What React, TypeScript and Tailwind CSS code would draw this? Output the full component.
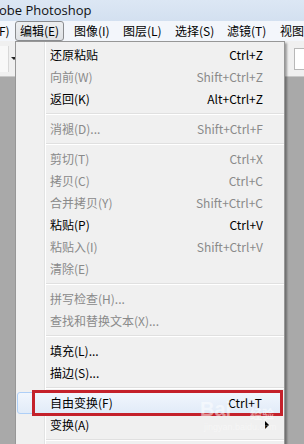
import React from "react";

type Item =
  | { sep: true }
  | { sep?: false; t: string; s?: string; d?: boolean; hl?: boolean; sub?: boolean };

const items: Item[] = [
  { t: "还原粘贴", s: "Ctrl+Z" },
  { t: "向前(W)", s: "Shift+Ctrl+Z", d: true },
  { t: "返回(K)", s: "Alt+Ctrl+Z" },
  { sep: true },
  { t: "消褪(D)...", s: "Shift+Ctrl+F", d: true },
  { sep: true },
  { t: "剪切(T)", s: "Ctrl+X", d: true },
  { t: "拷贝(C)", s: "Ctrl+C", d: true },
  { t: "合并拷贝(Y)", s: "Shift+Ctrl+C", d: true },
  { t: "粘贴(P)", s: "Ctrl+V" },
  { t: "粘贴入(I)", s: "Shift+Ctrl+V", d: true },
  { t: "清除(E)", d: true },
  { sep: true },
  { t: "拼写检查(H)...", d: true },
  { t: "查找和替换文本(X)...", d: true },
  { sep: true },
  { t: "填充(L)..." },
  { t: "描边(S)..." },
  { sep: true },
  { t: "自由变换(F)", s: "Ctrl+T", hl: true },
  { t: "变换(A)", sub: true },
  { sep: true },
];

const font = { fontFamily: '"Noto Sans CJK SC", "Noto Sans", sans-serif' };

export default function App() {
  return (
    <div
      className="relative w-[304px] h-[444px] overflow-hidden bg-[#a9a9a9] text-[12px] text-black"
      style={font}
    >
      {/* title bar */}
      <div className="h-[21px] bg-gradient-to-b from-[#dce7f4] to-[#d3e0f0] flex items-center">
        <span className="text-[13px] leading-none -ml-[1px] text-[#111]" style={{ fontFamily: '"Open Sans", "Noto Sans", sans-serif' }}>
          obe Photoshop
        </span>
      </div>
      {/* menu bar */}
      <div className="h-[20px] bg-[#f3f6fb] flex items-center text-[12px] leading-none whitespace-nowrap overflow-hidden">
        <div className="w-[16px] shrink-0 -ml-[1px]">F)</div>
        <div className="w-[54px] h-[20px] shrink-0">
          <div className="w-[49px] h-[20px] border border-[#8a8c8f] rounded-[3px] bg-gradient-to-b from-[#eceef0] to-[#dfe2e6] flex items-center pl-[4px]">
            编辑(E)
          </div>
        </div>
        <div className="w-[49px] shrink-0 pl-[5px]">图像(I)</div>
        <div className="w-[52px] shrink-0 pl-[5px]">图层(L)</div>
        <div className="w-[52px] shrink-0 pl-[5px]">选择(S)</div>
        <div className="w-[53px] shrink-0 pl-[5px]">滤镜(T)</div>
        <div className="shrink-0 pl-[5px]">视图(V)</div>
      </div>
      {/* options bar */}
      <div className="h-[36px] bg-[#f0f0f0] border-b border-[#c8c8c8] flex items-center">
        <div className="w-[9px] h-[26px] bg-[#f8f8f8] border-r border-[#d8d8d8]" />
        <svg width="6" height="4" className="ml-[2px]" viewBox="0 0 6 4">
          <polygon points="0,0 6,0 3,3" fill="#222" />
        </svg>
        <div className="flex-1" />
        <div className="w-[10px] h-[22px] bg-white border border-[#b8b8b8] border-r-0" />
      </div>

      {/* dropdown menu */}
      <div className="absolute left-[15px] top-[41px] w-[270px] bg-[#f0f0f0] border border-[#979797] shadow-[2px_2px_2px_rgba(0,0,0,0.35)] pt-[2px]">
        <div className="absolute left-[28px] top-0 bottom-0 w-[2px] border-l border-[#e2e3e3]">
          <div className="w-[1px] h-full bg-white" />
        </div>
        {items.map((it, i) =>
          it.sep ? (
            <div key={i} className="h-[8px] flex items-center pl-[30px]">
              <div className="w-full border-t border-[#e0e0e0] border-b border-b-white" />
            </div>
          ) : (
            <div
              key={i}
              className={`relative h-[22px] flex items-center pl-[33px] pr-[20px] mx-[1px] ${
                it.hl ? "bg-gradient-to-b from-[#f1f6fd] to-[#e1ebf8] border border-[#aecff7] rounded-[3px]" : ""
              } ${it.d ? "text-[#8a8a8a]" : "text-black"}`}
            >
              <span className={it.hl ? "-ml-[1px]" : ""}>{it.t}</span>
              <span className="flex-1" />
              {it.s && <span>{it.s}</span>}
              {it.sub && (
                <svg width="5" height="8" viewBox="0 0 5 8" className="absolute right-[13px] top-[7px]">
                  <polygon points="0,0 4,4 0,8" fill="#000" />
                </svg>
              )}
            </div>
          )
        )}
      </div>

      {/* red annotation box */}
      <div className="absolute left-[32px] top-[390px] w-[251px] h-[26px] border-[3px] border-[#c4212b]" />

      {/* watermark */}
      <div className="absolute left-[200px] top-[399px] text-white/50 text-[20px] font-bold leading-none" style={{ fontFamily: '"Liberation Sans", sans-serif' }}>
        Bai
      </div>
      <div className="absolute left-[250px] top-[408px] text-white/50 text-[12px] leading-none font-bold">
        经验
      </div>
      <div className="absolute left-[204px] top-[423px] text-white/40 text-[9px] leading-none" style={{ fontFamily: '"Liberation Sans", sans-serif' }}>
        jingyan.baidu.com
      </div>
    </div>
  );
}
